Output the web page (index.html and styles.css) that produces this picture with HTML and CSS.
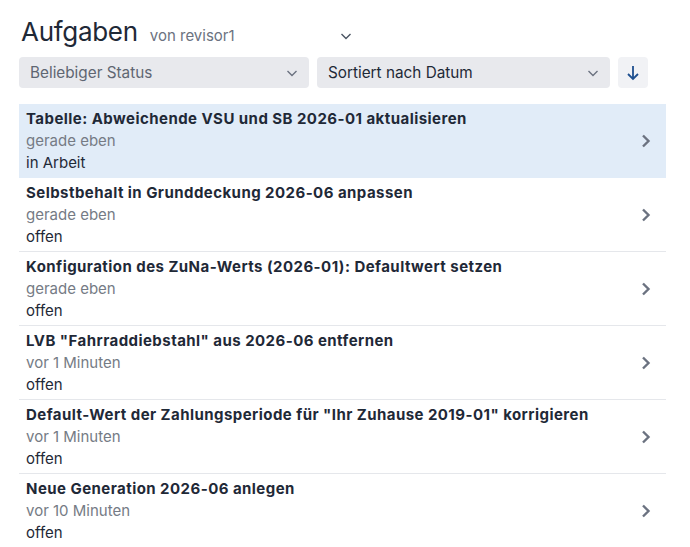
FILE: index.html
```html
<!DOCTYPE html>
<html lang="de">
<head>
<meta charset="utf-8">
<link rel="stylesheet" href="styles.css">
</head>
<body>
<div class="page">
  <div class="header">
    <h1 class="title">Aufgaben</h1>
    <div class="owner">
      <span>von revisor1</span>
      <svg class="chev-down" width="14" height="14" viewBox="0 0 14 14"><path d="M2.5 5 L7 9.5 L11.5 5" fill="none" stroke="#4b5563" stroke-width="1.4"/></svg>
    </div>
  </div>
  <div class="filters">
    <div class="select muted"><span>Beliebiger Status</span><svg width="14" height="14" viewBox="0 0 14 14"><path d="M2.5 5 L7 9.5 L11.5 5" fill="none" stroke="#6b7280" stroke-width="1.4"/></svg></div>
    <div class="select"><span>Sortiert nach Datum</span><svg width="14" height="14" viewBox="0 0 14 14"><path d="M2.5 5 L7 9.5 L11.5 5" fill="none" stroke="#6b7280" stroke-width="1.4"/></svg></div>
    <div class="sort-btn"><svg width="14" height="18" viewBox="0 0 14 18"><path d="M7 2 V15 M2 10 L7 15 L12 10" fill="none" stroke="#1e4f8f" stroke-width="1.8"/></svg></div>
  </div>
  <ul class="list">
    <li class="item active"><div class="text"><div class="t">Tabelle: Abweichende VSU und SB 2026-01 aktualisieren</div><div class="d">gerade eben</div><div class="s">in Arbeit</div></div><svg class="chev" width="12" height="16" viewBox="0 0 12 16"><path d="M3 2.5 L8.5 8 L3 13.5" fill="none" stroke="#6b7280" stroke-width="2.4"/></svg></li>
    <li class="item"><div class="text"><div class="t">Selbstbehalt in Grunddeckung 2026-06 anpassen</div><div class="d">gerade eben</div><div class="s">offen</div></div><svg class="chev" width="12" height="16" viewBox="0 0 12 16"><path d="M3 2.5 L8.5 8 L3 13.5" fill="none" stroke="#6b7280" stroke-width="2.4"/></svg></li>
    <li class="item"><div class="text"><div class="t">Konfiguration des ZuNa-Werts (2026-01): Defaultwert setzen</div><div class="d">gerade eben</div><div class="s">offen</div></div><svg class="chev" width="12" height="16" viewBox="0 0 12 16"><path d="M3 2.5 L8.5 8 L3 13.5" fill="none" stroke="#6b7280" stroke-width="2.4"/></svg></li>
    <li class="item"><div class="text"><div class="t">LVB "Fahrraddiebstahl" aus 2026-06 entfernen</div><div class="d">vor 1 Minuten</div><div class="s">offen</div></div><svg class="chev" width="12" height="16" viewBox="0 0 12 16"><path d="M3 2.5 L8.5 8 L3 13.5" fill="none" stroke="#6b7280" stroke-width="2.4"/></svg></li>
    <li class="item"><div class="text"><div class="t">Default-Wert der Zahlungsperiode für "Ihr Zuhause 2019-01" korrigieren</div><div class="d">vor 1 Minuten</div><div class="s">offen</div></div><svg class="chev" width="12" height="16" viewBox="0 0 12 16"><path d="M3 2.5 L8.5 8 L3 13.5" fill="none" stroke="#6b7280" stroke-width="2.4"/></svg></li>
    <li class="item"><div class="text"><div class="t">Neue Generation 2026-06 anlegen</div><div class="d">vor 10 Minuten</div><div class="s">offen</div></div><svg class="chev" width="12" height="16" viewBox="0 0 12 16"><path d="M3 2.5 L8.5 8 L3 13.5" fill="none" stroke="#6b7280" stroke-width="2.4"/></svg></li>
  </ul>
</div>
</body>
</html>
```
FILE: styles.css
```css
* { box-sizing: border-box; }
html, body { margin: 0; padding: 0; background: #fff; }
body { font-family: Inter, "Noto Sans", sans-serif; color: #1f2937; }
.page { padding: 14px 24px 0 19px; }
.header { display: flex; align-items: baseline; gap: 12px; padding-left: 2px; height: 37px; }
.title { margin: 0; font-size: 26px; font-weight: 400; color: #1f2937; letter-spacing: -0.3px; line-height: 36px; }
.owner { display: flex; align-items: center; font-size: 15px; color: #6b7280; width: 203px; justify-content: space-between; }
.filters { display: flex; gap: 8px; margin-top: 6px; height: 31px; }
.select { display: flex; align-items: center; justify-content: space-between; background: #e8e9ed; border-radius: 4px; padding: 0 10px 0 11px; font-size: 15.3px; color: #1f2937; width: 290px; }
.select + .select { width: 293px; }
.select.muted { color: #5f6672; }
.sort-btn { width: 30px; background: #f1f2f5; border-radius: 4px; display: flex; align-items: center; justify-content: center; }
.list { list-style: none; margin: 16px 0 0; padding: 0; width: 647px; }
.item { display: flex; align-items: center; padding: 4px 7px 3px; border-bottom: 1px solid #e5e7eb; }
.item.active { background: #e1ecf8; border-bottom-color: transparent; }
.text { flex: 1; font-size: 15px; line-height: 22px; }
.t { font-weight: 700; color: #1f2937; letter-spacing: 0.45px; }
.d { color: #757b85; }
.s { color: #1f2937; }
.chev { margin-right: 7px; }
```
